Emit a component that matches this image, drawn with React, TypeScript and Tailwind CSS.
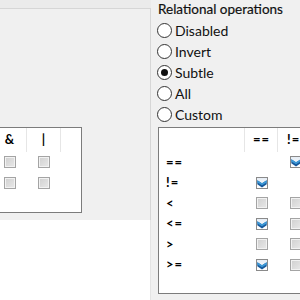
import React from "react";

type Cell = "none" | "on" | "off";

function Check({ state }: { state: Cell }) {
  if (state === "none") return null;
  if (state === "on") {
    return (
      <div className="w-[12px] h-[12px] border border-[#8a8a8a] bg-gradient-to-b from-[#e6edf5] to-[#ffffff] flex items-center justify-center">
        <svg width="10" height="10" viewBox="0 0 10 10">
          <path d="M0.3 2.2 L5 5.2 L9.7 2.2 L9.7 6.2 L5 9.4 L0.3 6.2 Z" fill="#17599b" />
          <path d="M0.3 2.2 L5 5.2 L9.7 2.2 L9.7 4.4 L5 7.2 L0.3 4.4 Z" fill="#3d9ad8" />
        </svg>
      </div>
    );
  }
  return (
    <div className="w-[12px] h-[12px] border border-[#a4a4a4] bg-[#f2f2f2] flex items-center justify-center">
      <div className="w-[8px] h-[8px] bg-gradient-to-br from-[#d2d2d2] to-[#e6e6e6]" />
    </div>
  );
}

function Radio({ label, checked }: { label: string; checked?: boolean }) {
  return (
    <div className="h-[21px] flex items-center pl-[6px]">
      <div className="w-[15px] h-[15px] rounded-full border border-[#333333] bg-white flex items-center justify-center shrink-0">
        {checked && <div className="w-[7px] h-[7px] rounded-full bg-[#111111]" />}
      </div>
      <span className="ml-[3px] text-[14px] leading-none text-[#111111]">{label}</span>
    </div>
  );
}

const rightRows: { label: string; cells: Cell[] }[] = [
  { label: "==", cells: ["none", "on"] },
  { label: "!=", cells: ["on", "none"] },
  { label: "<", cells: ["off", "off"] },
  { label: "<=", cells: ["on", "off"] },
  { label: ">", cells: ["off", "off"] },
  { label: ">=", cells: ["on", "off"] },
];

export default function App() {
  return (
    <div className="w-[300px] h-[300px] flex overflow-hidden bg-[#f0f0f0] font-['Lato',sans-serif] text-black">
      {/* Left column */}
      <div className="w-[151px] shrink-0 flex flex-col overflow-hidden">
        <div className="h-[8px] bg-[#ebebeb]" />
        <div className="h-[212px] bg-[#f0f0f0] border-t border-r border-[#d6d6d6] pt-[118px]">
          <div className="ml-[-60px] w-[142px] h-[86px] border border-[#7c7c7c] bg-white flex flex-col">
            <div className="h-[24px] flex items-stretch">
              <div className="w-[52px]" />
              <div className="w-[34px] border-r border-[#e6e6e6] flex items-center justify-center text-[13px] font-bold">&amp;</div>
              <div className="w-[34px] border-r border-[#e6e6e6] flex items-center justify-center text-[13px] font-bold">|</div>
            </div>
            {[0, 1].map((r) => (
              <div key={r} className="h-[20.5px] flex items-center">
                <div className="w-[52px]" />
                <div className="w-[34px] flex justify-center">
                  <Check state="off" />
                </div>
                <div className="w-[34px] flex justify-center">
                  <Check state="off" />
                </div>
              </div>
            ))}
          </div>
        </div>
        <div className="flex-1 bg-white border-r border-[#e4e4e4]" />
      </div>

      {/* Right column */}
      <div className="flex-1 min-w-0 overflow-hidden flex flex-col">
        <div className="h-[18px] flex items-center pl-[7px] text-[13.5px] text-[#111111] whitespace-nowrap [-webkit-text-stroke:0.2px_#111111]">
          Relational operations
        </div>
        <div className="mt-[2px] flex flex-col">
          <Radio label="Disabled" />
          <Radio label="Invert" />
          <Radio label="Subtle" checked />
          <Radio label="All" />
          <Radio label="Custom" />
        </div>
        <div className="mt-[2px] ml-[7px] w-[200px] shrink-0 h-[167px] border border-[#7c7c7c] bg-white flex flex-col">
          <div className="h-[24px] flex items-stretch">
            <div className="w-[86px] shrink-0 border-r border-[#e6e6e6]" />
            <div className="w-[33px] shrink-0 border-r border-[#e6e6e6] flex items-center justify-center text-[13px] font-bold tracking-[1px] pl-[1px]">==</div>
            <div className="w-[33px] shrink-0 flex items-center justify-start pl-[9px] text-[13px] font-bold tracking-[1px]">!=</div>
          </div>
          {rightRows.map((row) => (
            <div key={row.label} className="h-[20.5px] flex items-center">
              <div className="w-[86px] shrink-0 pl-[7px] text-[13px] font-bold tracking-[1px]">{row.label}</div>
              <div className="w-[34px] shrink-0 flex justify-center">
                <Check state={row.cells[0]} />
              </div>
              <div className="w-[33px] shrink-0 flex justify-center">
                <Check state={row.cells[1]} />
              </div>
            </div>
          ))}
        </div>
      </div>
    </div>
  );
}
